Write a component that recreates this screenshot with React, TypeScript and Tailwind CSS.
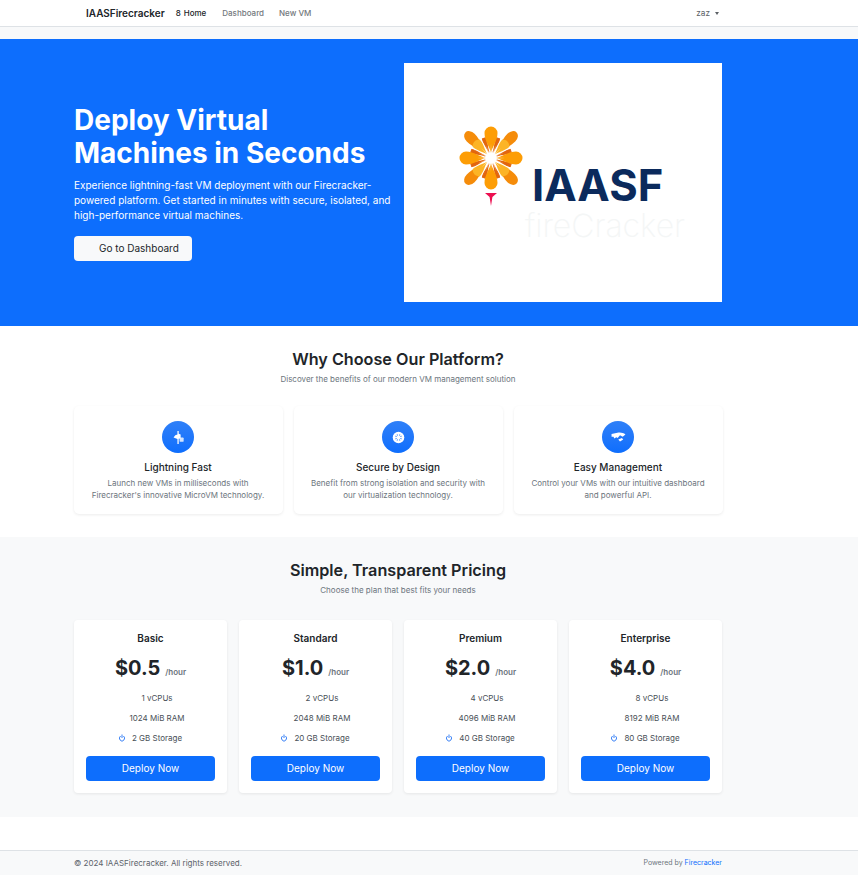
const features = [
  {
    title: "Lightning Fast",
    lines: ["Launch new VMs in milliseconds with", "Firecracker's innovative MicroVM technology."],
    icon: (
      <svg viewBox="0 0 14 14" className="size-[15px]" fill="white">
        <path d="M6 1h1.200v2.400l1.800.8v3.400l-1.800.6V13H6V8.400L2.400 7l1.600-2 2-.8z" />
        <rect x="8" y="7" width="3.800" height="4" rx="0.800" opacity="0.8" />
      </svg>
    ),
  },
  {
    title: "Secure by Design",
    lines: ["Benefit from strong isolation and security with", "our virtualization technology."],
    icon: (
      <svg viewBox="0 0 14 14" className="size-[15px]">
        <circle cx="7" cy="7" r="5.400" fill="white" />
        <circle cx="7" cy="7" r="3" fill="#5a9bf9" />
        <path d="M7 3.800v6.400M3.800 7h6.400M4.800 4.800l4.400 4.400M9.200 4.800l-4.400 4.400" stroke="white" strokeWidth="1" />
      </svg>
    ),
  },
  {
    title: "Easy Management",
    lines: ["Control your VMs with our intuitive dashboard", "and powerful API."],
    icon: (
      <svg viewBox="0 0 14 14" className="size-[15px]" fill="white">
        <path d="M.5 3.800 6 2.600c2.800-.6 5.400 0 7.500 1.600l-2.600 2.200L8.400 5 6.200 7.400 5 6.800 3 8 2.400 6.400.5 6.400z" />
        <path d="M6.800 8.800l3.400-1.400 1.200 1.400-3 2z" />
      </svg>
    ),
  },
];

const plans = [
  { name: "Basic", price: "$0.5", cpus: 1, ram: 1024, storage: 2 },
  { name: "Standard", price: "$1.0", cpus: 2, ram: 2048, storage: 20 },
  { name: "Premium", price: "$2.0", cpus: 4, ram: 4096, storage: 40 },
  { name: "Enterprise", price: "$4.0", cpus: 8, ram: 8192, storage: 80 },
];

const Flower = () => {
  const petal = "M0-5C-1-11-6.500-17-6.500-25A6.500 6.500 0 0 1 6.500-25C6.500-17 1-11 0-5Z";
  return (
    <svg viewBox="0 0 70 84" className="h-[84px] w-[70px]">
      <g transform="translate(35 34)">
        {[20, 70, 110, 160, 200, 250, 290, 340].map((a) => (
          <path key={a} d="M0-6C0-12-2.500-17-1.500-21L1.500-21C2.500-17 0-12 0-6Z" transform={`rotate(${a})`} fill="#e2660f" stroke="#e2660f" strokeWidth="1" />
        ))}
        {[45, 135, 225, 315].map((a) => (
          <path key={a} d={petal} transform={`rotate(${a}) scale(0.85 1.15)`} fill="#f58c0a" />
        ))}
        {[45, 135, 225, 315].map((a) => (
          <path key={a} d="M0-5C-1-10-5-15-5-21C-2-24 2-24 5-21C5-15 1-10 0-5Z" transform={`rotate(${a})`} fill="#fcb426" />
        ))}
        {[0, 90, 180, 270].map((a) => (
          <path key={a} d={petal} transform={`rotate(${a})`} fill="#fd9d05" />
        ))}
        {[0, 22, 45, 68, 90, 112, 135, 158, 180, 202, 225, 248, 270, 292, 315, 338].map((a) => (
          <path key={a} d="M-.4-2 0-14 .4-2Z" transform={`rotate(${a})`} fill="white" />
        ))}
        <circle r="2.500" fill="white" />
      </g>
      <path d="M29 69h12l-4.600 4-1.400 9-1.400-9z" fill="#ec0f50" />
    </svg>
  );
};

const StorageIcon = () => (
  <svg viewBox="0 0 6 9" className="h-[9px] w-[6px]" fill="none" stroke="#3b82f6" strokeWidth="1">
    <path d="M3 .5v3.500" />
    <path d="M1.500 2A2.500 2.800 0 1 0 4.500 2" />
  </svg>
);

export default function App() {
  return (
    <div className="min-h-[875px] bg-white font-['Inter',sans-serif] text-[#212529]">
      <nav className="flex h-[27px] items-center border-b border-[#dee2e6] bg-white pl-[86px] pr-[139px]">
        <span className="text-[10px] font-semibold">IAASFirecracker</span>
        <a className="ml-[11px] flex items-center gap-[3px] text-[8px] font-medium text-[#212529]">
          <span>8</span>Home
        </a>
        <a className="ml-[16px] text-[8px] font-medium text-[#73787d]">Dashboard</a>
        <a className="ml-[15px] text-[8px] font-medium text-[#73787d]">New VM</a>
        <span className="ml-auto flex items-center gap-[5px] text-[8.250px] text-[#5c6166]">
          zaz
          <span className="border-x-[2.500px] border-t-[3px] border-x-transparent border-t-[#5c6166]" />
        </span>
      </nav>
      <div className="h-[12px] bg-[#f8f9fa]" />

      <section className="flex h-[287px] items-center bg-[#0d6efd] pl-[74px]">
        <div className="w-[330px] text-white">
          <h1 className="text-[28px] font-bold leading-[33px]">
            Deploy Virtual
            <br />
            Machines in Seconds
          </h1>
          <p className="mt-[8px] w-[322px] text-[10px] leading-[15px]">
            Experience lightning-fast VM deployment with our Firecracker-powered platform. Get started in minutes with secure, isolated, and high-performance virtual machines.
          </p>
          <button className="mt-[13px] h-[25px] w-[118px] rounded-[4px] bg-[#f8f9fa] pl-[25px] text-left text-[10px] text-[#212529]">
            Go to Dashboard
          </button>
        </div>
        <div className="h-[239px] w-[318px] bg-white">
          <div className="flex items-start pl-[52px] pt-[61px]">
            <Flower />
            <div className="ml-[6px] mt-[44px]">
              <div className="text-[43.500px] font-bold leading-[34px] text-[#0b2a5c]">IAASF</div>
              <div className="-ml-[7px] mt-[7px] text-[32px] font-extralight leading-[34px] text-[#f4f6f6]">fireCracker</div>
            </div>
          </div>
        </div>
      </section>

      <section className="flex h-[211px] flex-col pl-[74px] pt-[22px]">
        <div className="w-[648px] text-center">
          <h2 className="text-[16.200px] font-semibold leading-[22px]">Why Choose Our Platform?</h2>
          <p className="mt-[3px] text-[8px] leading-[12px] text-[#6c757d]">Discover the benefits of our modern VM management solution</p>
        </div>
        <div className="mt-[21px] grid w-[649px] grid-cols-3 gap-[11px]">
          {features.map((f) => (
            <div key={f.title} className="flex h-[108px] flex-col items-center rounded-[5px] bg-white pt-[15px] pr-[1px] shadow-[0_1px_3px_rgba(0,0,0,0.08)]">
              <div className="flex size-[32px] items-center justify-center rounded-full bg-gradient-to-b from-[#2f80f8] to-[#0d6efd]">{f.icon}</div>
              <h3 className="mt-[7px] text-[10px] font-medium leading-[14px]">{f.title}</h3>
              <p className="mt-[3px] text-center text-[8px] leading-[12px] text-[#6c757d]">
                {f.lines[0]}
                <br />
                {f.lines[1]}
              </p>
            </div>
          ))}
        </div>
      </section>

      <section className="h-[280px] bg-[#f8f9fa] pl-[74px] pt-[22px]">
        <div className="w-[648px] text-center">
          <h2 className="text-[16.200px] font-semibold leading-[22px]">Simple, Transparent Pricing</h2>
          <p className="mt-[3px] text-[8px] leading-[12px] text-[#6c757d]">Choose the plan that best fits your needs</p>
        </div>
        <div className="mt-[24px] grid w-[648px] grid-cols-4 gap-[12px]">
          {plans.map((p) => (
            <div key={p.name} className="flex h-[173px] flex-col rounded-[4px] bg-white px-[12px] pt-[11px] shadow-[0_1px_3px_rgba(0,0,0,0.08)]">
              <h3 className="text-center text-[10px] font-semibold leading-[14px]">{p.name}</h3>
              <div className="mt-[8px] flex h-[26px] items-baseline justify-center gap-[5px]">
                <span className="text-[20px] font-bold">{p.price}</span>
                <span className="text-[8px] font-semibold text-[#6c757d]">/hour</span>
              </div>
              <div className="mt-[13px] flex flex-col items-center gap-[8px] text-[8px] leading-[12px] text-[#495057]">
                <div className="pl-[13px]">{p.cpus} vCPUs</div>
                <div className="pl-[13px]">{p.ram} MiB RAM</div>
                <div className="flex items-center gap-[7px]">
                  <StorageIcon />
                  {p.storage} GB Storage
                </div>
              </div>
              <button className="mt-[12px] h-[25px] rounded-[4px] bg-[#0d6efd] text-[10px] text-white">Deploy Now</button>
            </div>
          ))}
        </div>
      </section>

      <footer className="mt-[33px] flex h-[25px] w-full items-center border-t border-[#dee2e6] bg-[#f8f9fa] pl-[74px] pr-[136px]">
        <span className="text-[8px] text-[#5c636a]">© 2024 IAASFirecracker. All rights reserved.</span>
        <span className="ml-auto text-[7px] text-[#6c757d]">
          Powered by <a className="text-[#0d6efd]">Firecracker</a>
        </span>
      </footer>
    </div>
  );
}
